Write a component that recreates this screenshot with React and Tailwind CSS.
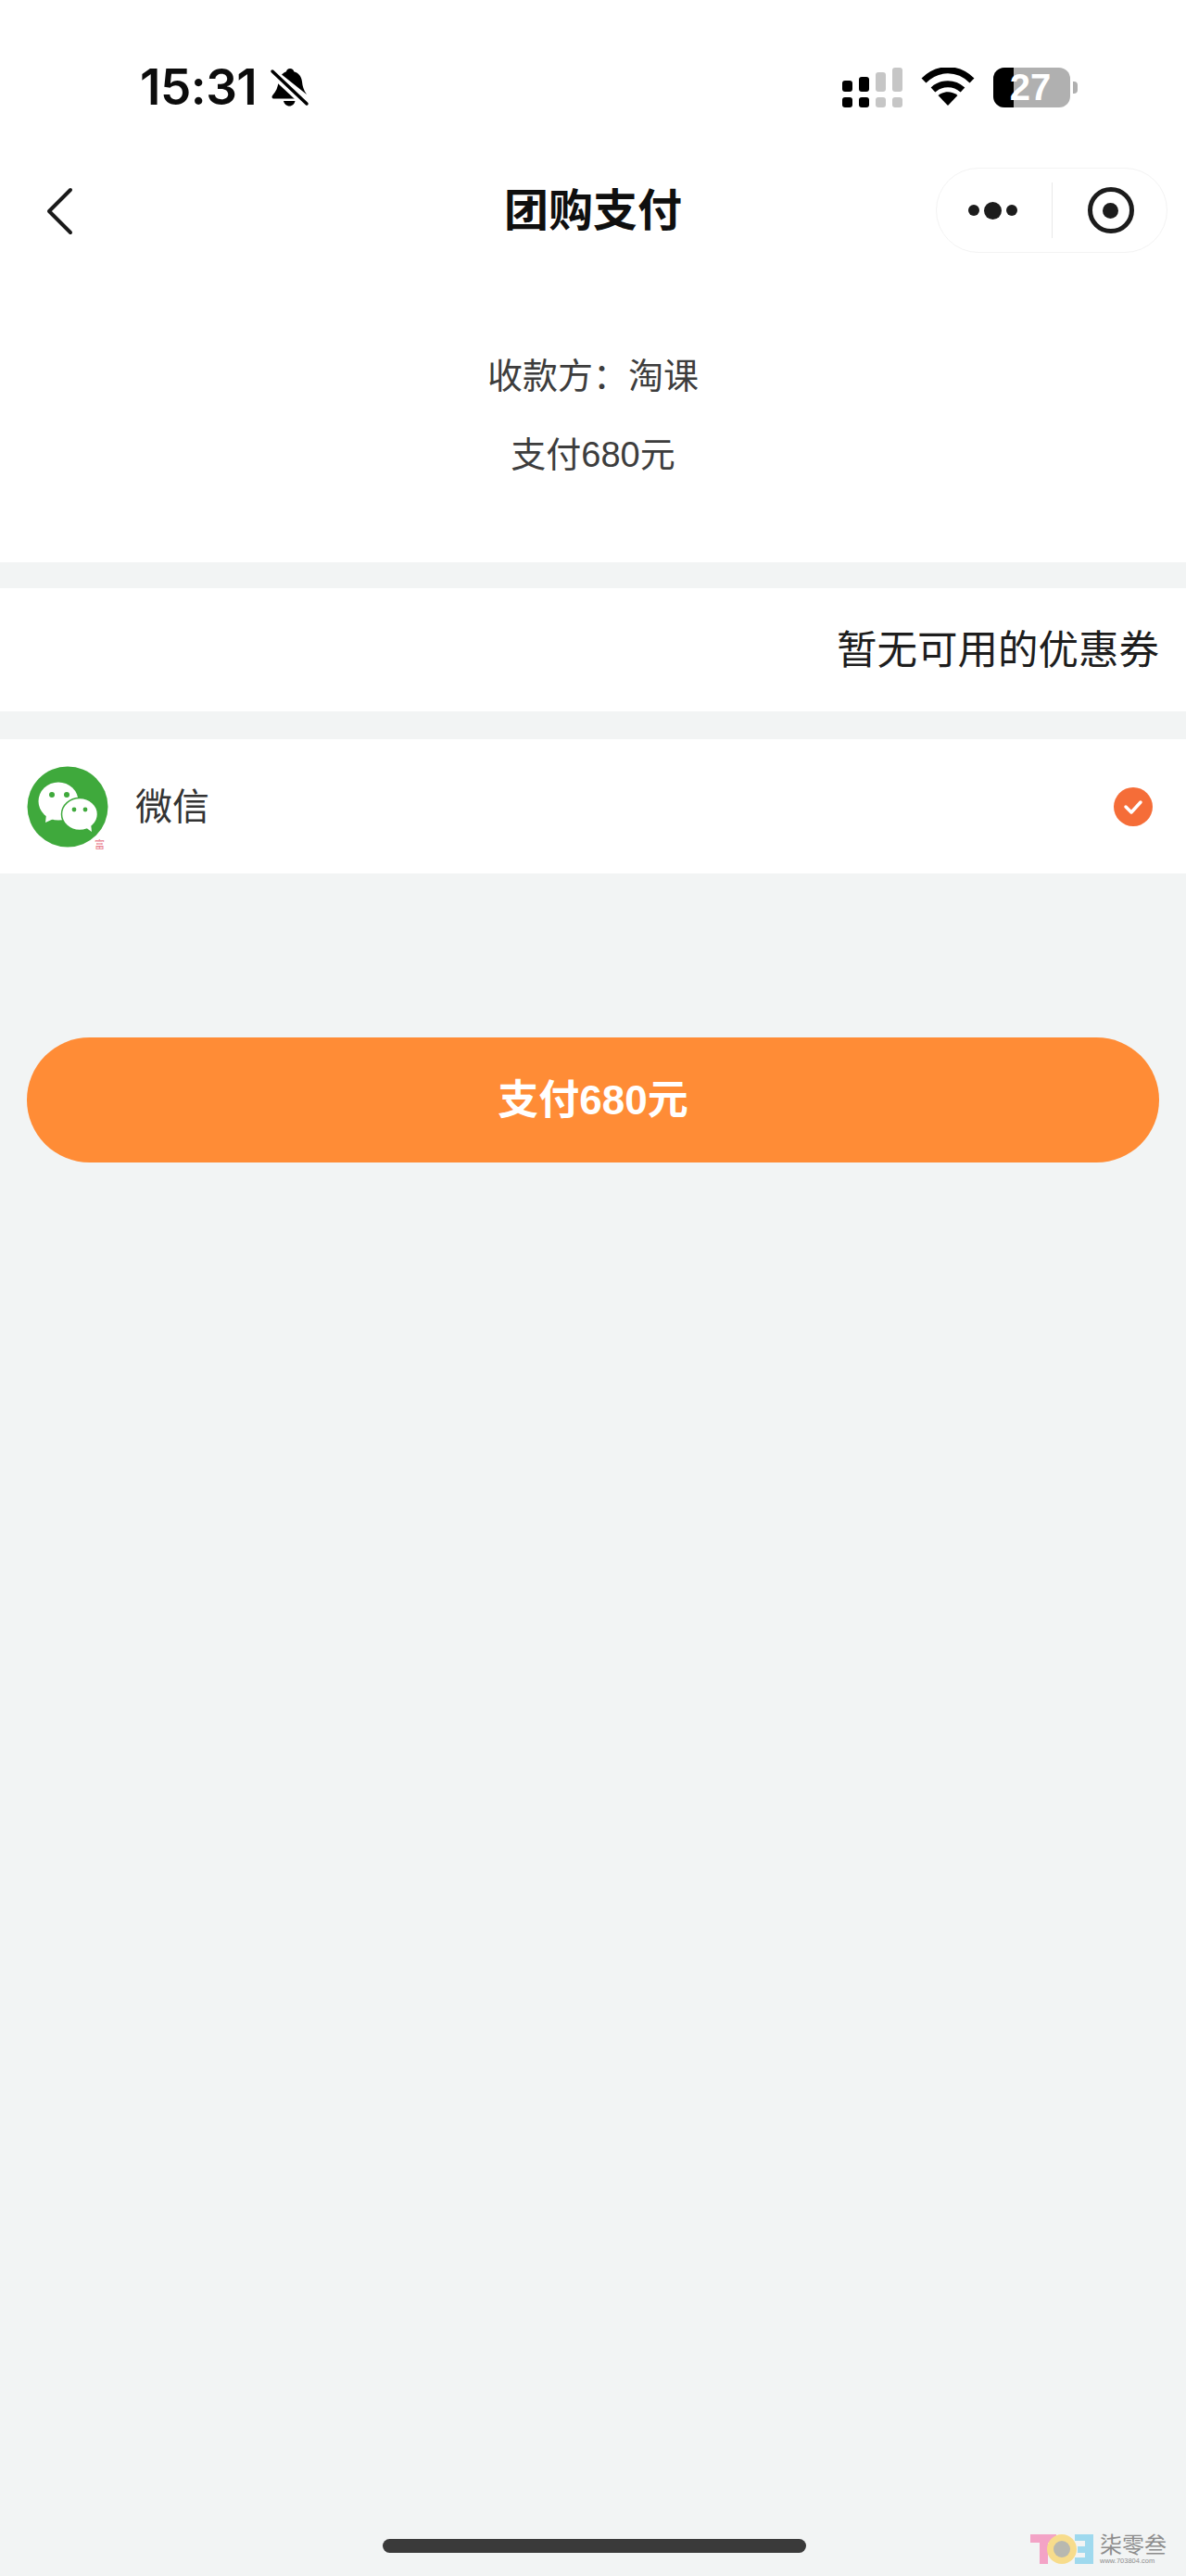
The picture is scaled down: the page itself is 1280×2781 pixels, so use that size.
const cjk = "font-['Liberation_Sans','Noto_Sans_CJK_SC',sans-serif]";

function MuteBell() {
  return (
    <svg width="44" height="46" viewBox="0 0 44 44" className="ml-[14px] mt-[1px]">
      <path d="M22 1c2.500 0 4 1.500 4.200 3.200 5.300 1.400 8.200 5.600 8.800 11 .5 4.600 1.500 9 5 13.800L13 7.500c1.500-1.500 3.500-2.700 5-3.300C18.200 2.500 19.700 1 22 1z" fill="#000" />
      <path d="M9.500 15c-.4 6-2.700 11-6 14.500-1.800 2-1 4 1.300 4H27z" fill="#000" />
      <path d="M15 36h12.500c-.6 3-3 5.500-6.200 5.500s-5.700-2.500-6.300-5.500z" fill="#000" />
      <path d="M0 4l42 39" stroke="#fff" strokeWidth="7" />
      <path d="M3 4l37 35" stroke="#000" strokeWidth="3.500" strokeLinecap="round" />
    </svg>
  );
}

function Signal() {
  const bars = [
    { top: "h-[12px]", c: "bg-black" },
    { top: "h-[16px]", c: "bg-black" },
    { top: "h-[21px]", c: "bg-[#c6c6c6]" },
    { top: "h-[26px]", c: "bg-[#c6c6c6]" },
  ];
  return (
    <div className="flex gap-[7px] items-end h-[44px]">
      {bars.map((b, i) => (
        <div key={i} className="flex flex-col justify-end gap-[6px] w-[11px]">
          <div className={`w-[11px] rounded-[3px] ${b.top} ${b.c}`} />
          <div className={`w-[11px] h-[11px] rounded-[3px] ${b.c}`} />
        </div>
      ))}
    </div>
  );
}

function Wifi() {
  return (
    <svg width="58" height="42" viewBox="0 0 58 42">
      <path d="M3 14C18 -1 40 -1 55 14" fill="none" stroke="#000" strokeWidth="7" />
      <path d="M13 24c9.500-8.500 22.500-8.500 32 0" fill="none" stroke="#000" strokeWidth="7" />
      <path d="M18.500 30c6.500-5 14.500-5 21 0L29 41z" fill="#000" />
    </svg>
  );
}

function Battery() {
  return (
    <div className="flex items-center">
      <div className="relative w-[83px] h-[43px] rounded-[12px] bg-[#b0b0b0]">
        <div className="w-[22px] h-full rounded-l-[12px] bg-black" />
        <span className="absolute inset-0 flex items-center justify-center font-['Liberation_Sans',sans-serif] font-bold text-white text-[40px] leading-[43px] pr-[3px]">27</span>
      </div>
      <div className="w-[5px] h-[13px] ml-[3px] rounded-r-[4px] bg-[#b0b0b0]" />
    </div>
  );
}

function WechatIcon() {
  return (
    <div className="relative w-[88px] h-[88px] shrink-0">
      <svg width="88" height="88" viewBox="0 0 88 88">
        <circle cx="44" cy="44" r="43.500" fill="#3fa93c" />
        <ellipse cx="34" cy="38" rx="21.500" ry="20.500" fill="#fff" />
        <path d="M21 52l-1 9 11-5z" fill="#fff" />
        <circle cx="27" cy="31" r="3" fill="#3fa93c" />
        <circle cx="43" cy="31" r="3" fill="#3fa93c" />
        <ellipse cx="57" cy="52" rx="19.500" ry="17.500" fill="#fff" stroke="#3fa93c" strokeWidth="1.500" />
        <path d="M63 66l7 5-1-9z" fill="#fff" />
        <circle cx="51" cy="47" r="2.400" fill="#3fa93c" />
        <circle cx="63" cy="47" r="2.400" fill="#3fa93c" />
      </svg>
      <span className={`absolute right-[4px] bottom-[-3px] bg-white text-[#e87c8c] text-[11px] leading-[12px] ${cjk}`}>富</span>
    </div>
  );
}

function Watermark() {
  return (
    <div className="absolute left-[1110px] top-[2734px] flex items-center gap-[5px]">
      <svg width="72" height="36" viewBox="0 0 72 36">
        <path d="M2 2h28v9H21v23h-9V11H2z" fill="#f3a3c6" />
        <circle cx="36" cy="18" r="16" fill="#f7dc8c" />
        <circle cx="36" cy="18" r="9" fill="#b8b8b0" />
        <path d="M50 2h20v32H50v-7h11v-5H53v-7h8V9H50z" fill="#9fd9ee" />
      </svg>
      <div className="flex flex-col">
        <span className={`text-[24px] leading-[25px] text-[#8d8d8d] ${cjk}`}>柒零叁</span>
        <span className="font-['Liberation_Sans',sans-serif] text-[7.500px] leading-[9px] text-[#8d8d8d]">www.703804.com</span>
      </div>
    </div>
  );
}

export default function App() {
  return (
    <div className={`relative w-[1280px] h-[2781px] overflow-hidden bg-[#f2f4f4] ${cjk}`}>
      {/* status bar + nav */}
      <div className="bg-white h-[607px]">
        <div className="h-[181px] flex items-start justify-between pl-[151px] pr-[117px] pt-[70px]">
          <div className="flex items-center">
            <span className="font-['Inter',sans-serif] font-semibold text-[53px] leading-[48px] tracking-[-0.5px] text-[#0c0c0c]">15:31</span>
            <MuteBell />
          </div>
          <div className="flex items-center gap-[20px] pt-[2px]">
            <Signal />
            <Wifi />
            <Battery />
          </div>
        </div>

        <div className="relative flex items-center justify-center h-[92px]">
          <svg width="30" height="52" viewBox="0 0 30 52" className="absolute left-[49px] top-[21px]">
            <path d="M27 3L4 26l23 23" fill="none" stroke="#1a1a1a" strokeWidth="4" strokeLinecap="round" strokeLinejoin="round" />
          </svg>
          <h1 className="text-[48px] leading-[48px] font-bold text-[#0f0f0f] pt-[2px]">团购支付</h1>
          <div className="absolute left-[1010px] top-0 w-[250px] h-[92px] rounded-full border border-[#f3f3f3] flex items-center">
            <div className="flex-1 flex items-center justify-center gap-[5px] pr-[3px]">
              <div className="w-[12px] h-[12px] rounded-full bg-[#1c1c1c]" />
              <div className="w-[19px] h-[19px] rounded-full bg-[#1c1c1c]" />
              <div className="w-[12px] h-[12px] rounded-full bg-[#1c1c1c]" />
            </div>
            <div className="w-[1px] h-[60px] bg-[#e8e8e8]" />
            <div className="flex-1 flex items-center justify-center pl-[3px]">
              <div className="w-[50px] h-[50px] rounded-full border-[5px] border-[#1c1c1c] flex items-center justify-center">
                <div className="w-[17px] h-[17px] rounded-full bg-[#1c1c1c]" />
              </div>
            </div>
          </div>
        </div>

        <div className="flex flex-col items-center pt-[111px] text-[#3d3d3d] text-[38px] leading-[44px] gap-[41px]">
          <p>收款方：淘课</p>
          <p>支付680元</p>
        </div>
      </div>

      {/* coupons */}
      <div className="mt-[28px] bg-white h-[133px] flex items-center justify-end px-[29px]">
        <span className="text-[43.500px] leading-[48px] text-[#1d1d1d]">暂无可用的优惠券</span>
      </div>

      {/* pay method */}
      <div className="mt-[30px] bg-white h-[145px] flex items-center px-[29px]">
        <WechatIcon />
        <span className="ml-[29px] text-[40px] leading-[44px] text-[#333]">微信</span>
        <div className="ml-auto mr-[7px] w-[42px] h-[42px] rounded-full bg-[#f56d38] flex items-center justify-center">
          <svg width="24" height="24" viewBox="0 0 24 24">
            <path d="M4 12l6 6 10-11" fill="none" stroke="#fff" strokeWidth="3.500" strokeLinecap="round" strokeLinejoin="round" />
          </svg>
        </div>
      </div>

      <button className="mt-[177px] mx-[29px] w-[1222px] h-[135px] rounded-full bg-[#ff8c36] text-white text-[44px] font-bold flex items-center justify-center">
        支付680元
      </button>

      <div className="absolute left-[413px] top-[2741px] w-[457px] h-[15px] rounded-full bg-[#3a3a3a]" />
      <Watermark />
    </div>
  );
}
